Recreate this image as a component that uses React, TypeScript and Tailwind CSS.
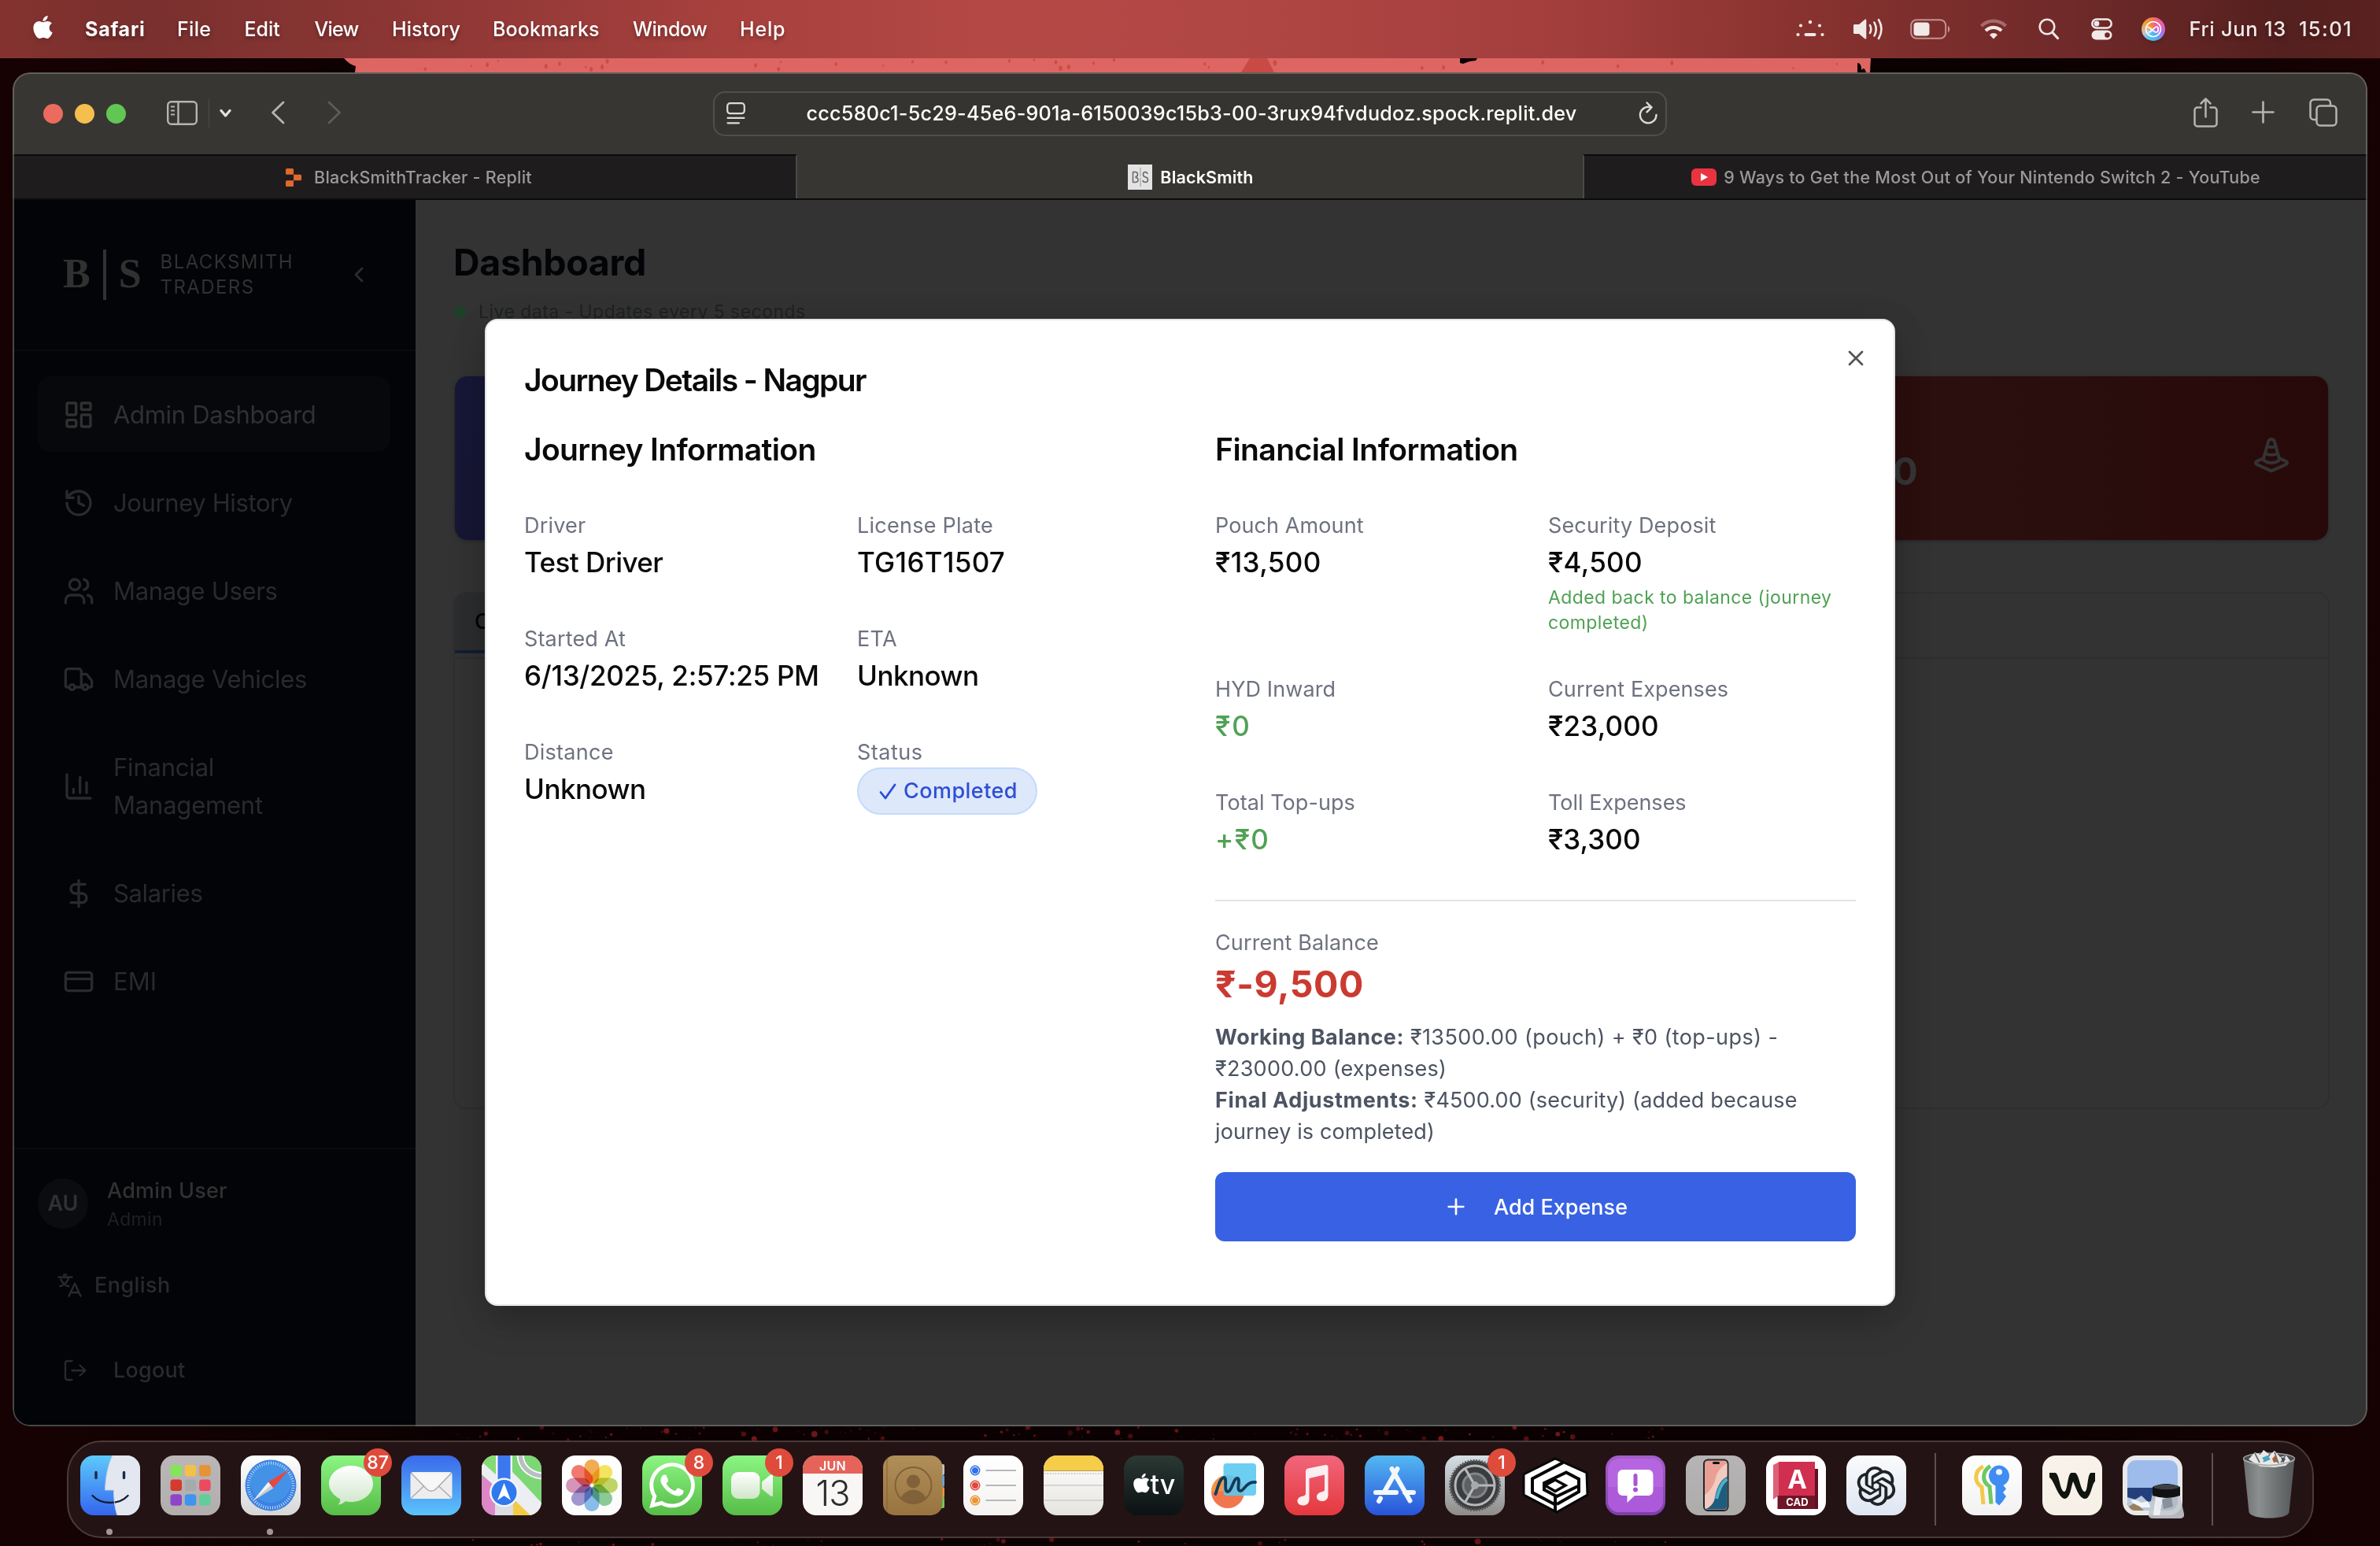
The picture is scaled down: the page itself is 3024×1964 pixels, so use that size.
import React from "react";
import {
  ChartColumn,
  ChevronLeft,
  CreditCard,
  DollarSign,
  History,
  LayoutDashboard,
  Plus,
  TrafficCone,
  Truck,
  Users,
  X,
} from "lucide-react";
import { FaApple, FaWhatsapp } from "react-icons/fa";
import { AiOutlineOpenAI } from "react-icons/ai";

/* ---------- Menu bar ---------- */

const menus = [
  { label: "Safari", cls: "w-[117px] font-bold tracking-[0.76px]" },
  { label: "File", cls: "w-[85.500px] tracking-[0.3px]" },
  { label: "Edit", cls: "w-[89px]" },
  { label: "View", cls: "w-[98.500px] tracking-[-0.76px]" },
  { label: "History", cls: "w-[128px] tracking-[0.1px]" },
  { label: "Bookmarks", cls: "w-[178px] tracking-[0.12px]" },
  { label: "Window", cls: "w-[136px] tracking-[-0.5px]" },
  { label: "Help", cls: "tracking-[0.8px]" },
];

function MenuBar() {
  return (
    <header className="flex h-[74px] shrink-0 items-center bg-[linear-gradient(90deg,#84322f_0%,#79302e_6%,#8e3735_18%,#a8413e_31%,#b44845_42%,#b04644_53%,#a23e3c_66%,#87322f_76%,#6f2a29_87%,#54201f_96%,#5a2220_100%)] text-[25px] font-medium text-white [text-shadow:0_3px_5px_rgba(0,0,0,0.35)]">
      <FaApple className="mt-[-5px] ml-[39px] h-[33px] w-[31px] drop-shadow-md" />
      <nav className="ml-[38px] flex items-center leading-[40px]">
        {menus.map((m) => (
          <span key={m.label} className={m.cls}>
            {m.label}
          </span>
        ))}
      </nav>
      <div className="ml-auto flex items-center pr-[35px] text-[#f1e9e8]">
        <svg className="h-[24px] w-[36px]" viewBox="0 0 36 24" fill="currentColor">
          <circle cx="18" cy="3" r="2.200" />
          <circle cx="6" cy="7.500" r="2.100" />
          <circle cx="30" cy="7.500" r="2.100" />
          <circle cx="2.500" cy="19" r="2.100" />
          <circle cx="33.500" cy="19" r="2.100" />
          <rect x="10.500" y="17" width="15" height="4" rx="2" />
        </svg>
        <svg className="ml-[36px] h-[30px] w-[40px]" viewBox="0 0 40 30">
          <path d="M1 10.500C1 9.500 1.600 9 2.500 9H8l7.500-6.300c.8-.6 1.800-.2 1.800.8v23c0 1-1 1.400-1.800.8L8 21H2.500C1.600 21 1 20.500 1 19.500z" fill="currentColor" />
          <path d="M22 10q2.600 5 0 10M27.500 6.500q4.500 8.500 0 17M33 3q7 12 0 24" fill="none" stroke="currentColor" strokeWidth="2.600" strokeLinecap="round" />
        </svg>
        <svg className="ml-[33px] h-[26px] w-[52px]" viewBox="0 0 52 26">
          <rect x="1.200" y="1.200" width="44" height="23.600" rx="7" fill="none" stroke="#d9b5b4" strokeWidth="2" opacity=".75" />
          <rect x="4.500" y="4.500" width="20" height="17" rx="4" fill="currentColor" />
          <path d="M48 9c3 1 3 7 0 8z" fill="#d9b5b4" opacity=".75" />
        </svg>
        <svg className="ml-[37px] h-[26px] w-[34px]" viewBox="0 0 34 26" fill="none" strokeWidth="4.200">
          <path d="M1.500 9a22 22 0 0 1 31 0" stroke="#a86a68" />
          <path d="M7 15a14 14 0 0 1 20 0" stroke="currentColor" />
          <path d="M17 25.500l-5-5.300a7 7 0 0 1 10 0z" fill="currentColor" />
        </svg>
        <svg className="ml-[40px] h-[28px] w-[27px]" viewBox="0 0 27 28" fill="none" stroke="currentColor" strokeLinecap="round">
          <circle cx="11" cy="11" r="9.300" strokeWidth="2.600" />
          <path d="M18 18.500l6.500 7" strokeWidth="3.200" />
        </svg>
        <svg className="ml-[40px] h-[28px] w-[27px]" viewBox="0 0 27 28">
          <rect x="1.300" y="1.500" width="24.400" height="11" rx="5.500" fill="none" stroke="currentColor" strokeWidth="2.500" />
          <circle cx="7" cy="7" r="3.400" fill="currentColor" />
          <path fillRule="evenodd" d="M6.500 15.500h14a6 6 0 0 1 0 12h-14a6 6 0 0 1 0-12zM20.500 18.300a3.300 3.300 0 1 0 0 6.600a3.300 3.300 0 1 0 0-6.600z" fill="currentColor" />
        </svg>
        <span className="ml-[37px] flex size-[30px] items-center justify-center rounded-full bg-[conic-gradient(from_20deg,#f2617f,#ea5fb4,#b06be8,#58a8f0,#4cc3ef,#b9c6d8,#f0a848,#f08a3c,#f2617f)] shadow-md">
          <svg className="size-[22px]" viewBox="0 0 22 22" fill="none" stroke="#fff" strokeWidth="1.700">
            <circle cx="11" cy="11" r="9.500" />
            <path d="M2 8.500c5-2 9 7 13 6.500 3-.5 3-7 0-7-3 0-6 7-10 7" />
          </svg>
        </span>
        <span className="ml-[30px] text-[25.500px] tracking-[0.7px]">Fri Jun 13</span>
        <span className="ml-[16px] text-[25.500px] tracking-[1.4px]">15:01</span>
      </div>
    </header>
  );
}

/* ---------- Safari window chrome ---------- */

function TitleBar() {
  return (
    <div className="grid h-[104px] grid-cols-[1fr_1212px_1fr] items-center bg-[#383633]">
      <div className="flex items-center pl-[39px] text-[#b5b4b2]">
        <span className="size-[25px] rounded-full bg-[#ed6a5f]" />
        <span className="ml-[15px] size-[25px] rounded-full bg-[#f5bf4f]" />
        <span className="ml-[15px] size-[25px] rounded-full bg-[#62c655]" />
        <svg className="mt-[-2px] ml-[52px] h-[31px] w-[39px]" viewBox="0 0 39 31" fill="none" stroke="currentColor" strokeWidth="2.400">
          <rect x="1.200" y="1.200" width="36.600" height="28.600" rx="4.500" />
          <path d="M14.500 1.500v28" />
          <path d="M5 7.500h5M5 12.500h5M5 17.500h5" strokeWidth="2" />
        </svg>
        <span className="ml-[14px] h-[36px] w-[1px] bg-[#4c4b49]" />
        <svg className="mt-[-1px] ml-[13px] h-[12px] w-[15px]" viewBox="0 0 15 12" fill="none" stroke="#e3e2e1" strokeWidth="3.200" strokeLinecap="round" strokeLinejoin="round">
          <path d="M2 2.500l5.500 6.500L13 2.500" />
        </svg>
        <svg className="mt-[-2px] ml-[50px] h-[30px] w-[18px]" viewBox="0 0 18 30" fill="none" stroke="currentColor" strokeWidth="2.800" strokeLinecap="round" strokeLinejoin="round">
          <path d="M16 2L2.500 15L16 28" />
        </svg>
        <svg className="mt-[-2px] ml-[54px] h-[30px] w-[18px]" viewBox="0 0 18 30" fill="none" stroke="#5d5c5a" strokeWidth="2.800" strokeLinecap="round" strokeLinejoin="round">
          <path d="M2 2l13.500 13L2 28" />
        </svg>
      </div>
      <div className="flex h-[57px] items-center justify-between rounded-[15px] border-2 border-[#504f4c] bg-[#363431] pr-[9px] pl-[15px] text-[#dcdbda]">
        <svg className="h-[28px] w-[24px]" viewBox="0 0 24 28" fill="none" stroke="currentColor" strokeWidth="2.200" strokeLinecap="round">
          <rect x="1.200" y="1.200" width="21.600" height="13" rx="3.500" />
          <path d="M1.500 19.800h21M1.500 26.300h14.500" />
        </svg>
        <span className="pt-[2px] text-[25.200px] font-medium tracking-[0.23px] text-white">
          ccc580c1-5c29-45e6-901a-6150039c15b3-00-3rux94fvdudoz.spock.replit.dev
        </span>
        <svg className="h-[30px] w-[26px]" viewBox="0 0 26 30" fill="none" stroke="currentColor" strokeWidth="2.400" strokeLinecap="round" strokeLinejoin="round">
          <path d="M16.500 7.300A10.300 10.300 0 1 0 23.500 17M11.500 1.500l6 5.800-6 6" />
        </svg>
      </div>
      <div className="flex items-center justify-end pr-[38px] text-[#b5b4b2]">
        <svg className="mt-[-3px] h-[38px] w-[31px]" viewBox="0 0 31 38" fill="none" stroke="currentColor" strokeWidth="2.500" strokeLinecap="round" strokeLinejoin="round">
          <path d="M9.500 12.500H5a3.500 3.500 0 0 0-3.500 3.500v17A3.500 3.500 0 0 0 5 36.500h21a3.500 3.500 0 0 0 3.500-3.500V16a3.500 3.500 0 0 0-3.500-3.500h-4.500M15.500 24.500V1.800M9.500 7.500l6-6 6 6" />
        </svg>
        <svg className="mt-[-3px] ml-[43px] size-[29px]" viewBox="0 0 29 29" stroke="currentColor" strokeWidth="2.600" strokeLinecap="round">
          <path d="M14.500 1.500v26M1.500 14.500h26" />
        </svg>
        <svg className="mt-[-3px] ml-[44px] size-[36px]" viewBox="0 0 36 36" fill="none" stroke="currentColor" strokeWidth="2.500">
          <rect x="9.500" y="9.500" width="25" height="25" rx="4.500" />
          <path d="M9 27H6a4.500 4.500 0 0 1-4.500-4.500V6A4.500 4.500 0 0 1 6 1.500h16.500A4.500 4.500 0 0 1 27 6v3" />
        </svg>
      </div>
    </div>
  );
}

function TabBar() {
  return (
    <div className="grid h-[58px] grid-cols-[997px_998px_997px] border-b-2 border-[#0c0b0c] bg-[#383633] text-[21.500px] font-medium tracking-[0.24px] text-[#9b999a]">
      <div className="flex items-center justify-center border-t-2 border-r-2 border-t-[#0c0b0c] border-r-[#4b4a49] bg-[#1f1c1d] pl-[12px]">
        <svg className="mr-[15px] h-[23px] w-[21px]" viewBox="0 0 21 23" fill="#e0692d">
          <path d="M1.500 0h7a1.500 1.500 0 0 1 1.500 1.500V7.700H1.500A1.500 1.500 0 0 1 0 6.200V1.500A1.500 1.500 0 0 1 1.500 0zM10 7.700h8.500a1.500 1.500 0 0 1 1.500 1.500v4.600a1.500 1.500 0 0 1-1.500 1.500H10zM1.500 15.300H10v6.200A1.500 1.500 0 0 1 8.500 23h-7A1.500 1.500 0 0 1 0 21.500v-4.700a1.500 1.500 0 0 1 1.500-1.500z" />
        </svg>
        BlackSmithTracker - Replit
      </div>
      <div className="flex items-center justify-center pt-[2px] pl-[2px] font-semibold tracking-[0.17px] text-white">
        <span className="mr-[10px] flex h-[32px] w-[31px] items-center justify-center bg-[#e4e3e3]">
          <svg className="size-[26px]" viewBox="0 0 26 26" fill="none" stroke="#666" strokeWidth="1.500">
            <path d="M13 1v24" stroke="#999" strokeWidth="1" />
            <path d="M0 13h26" stroke="#e4e3e3" strokeWidth="1.500" />
            <path d="M3.500 6.500v13M3 6.500h3.500q3 0 3 3t-3 3M6.500 13.500q3.500 0 3.500 3t-3.500 3H3M22 9q-.5-2.500-3-2.500T16.500 9.500t3 3.500 3 3.500-3.200 3-3.300-2.500" />
          </svg>
        </span>
        BlackSmith
      </div>
      <div className="flex items-center justify-center border-t-2 border-l-2 border-t-[#0c0b0c] border-l-[#4b4a49] bg-[#1f1c1d]">
        <span className="mr-[9px] flex h-[22px] w-[32px] items-center justify-center rounded-[6px] bg-[#ea3340]">
          <svg className="h-[10px] w-[9px]" viewBox="0 0 9 10" fill="#fff">
            <path d="M0 0l9 5-9 5z" />
          </svg>
        </span>
        <span className="tracking-[0.26px]">9 Ways to Get the Most Out of Your Nintendo Switch 2 - YouTube</span>
      </div>
    </div>
  );
}

/* ---------- Web application ---------- */

const navItems = [
  { label: "Admin Dashboard", Icon: LayoutDashboard, cls: "tracking-[-0.3px]", active: true },
  { label: "Journey History", Icon: History, cls: "tracking-[-0.38px]" },
  { label: "Manage Users", Icon: Users, cls: "tracking-[-0.32px]" },
  { label: "Manage Vehicles", Icon: Truck, cls: "tracking-[-0.28px]" },
  { label: "Financial Management", Icon: ChartColumn, cls: "tracking-[-0.2px] w-[240px]" },
  { label: "Salaries", Icon: DollarSign, cls: "tracking-[-0.35px]" },
  { label: "EMI", Icon: CreditCard, cls: "" },
];

function Sidebar() {
  return (
    <aside className="flex w-[512px] shrink-0 flex-col bg-[#030407] text-[#292a2b]">
      <div className="flex h-[192px] items-center border-b-2 border-[#090b0f] pl-[64px] text-[#313131]">
        <span className="pb-[2px] font-['Liberation_Serif'] text-[52px] leading-[64px] font-bold">B</span>
        <span className="ml-[16px] h-[64px] w-[4px] bg-[#313131]" />
        <span className="ml-[16px] pb-[2px] font-['Liberation_Serif'] text-[52px] leading-[64px] font-bold">S</span>
        <span className="ml-[24px] w-[180px] text-[24px] leading-[32px] tracking-[1.4px]">
          BLACKSMITH
          <br />
          TRADERS
        </span>
        <ChevronLeft className="ml-[56px] size-[32px] text-[#2c2d2d]" />
      </div>
      <nav className="flex flex-col gap-[16px] px-[32px] pt-[32px]">
        {navItems.map(({ label, Icon, cls, active }) => (
          <div
            key={label}
            className={
              active
                ? "flex items-center gap-[24px] rounded-[16px] bg-[#06080b] px-[32px] pt-[25px] pb-[23px] text-[#303131]"
                : "flex items-center gap-[24px] rounded-[16px] px-[32px] pt-[25px] pb-[23px]"
            }
          >
            <Icon className="size-[40px] shrink-0" strokeWidth={2} />
            <span className={"text-[31px] leading-[48px] " + cls}>{label}</span>
          </div>
        ))}
      </nav>
      <div className="mt-auto flex h-[354px] flex-col border-t-2 border-[#090b0f] px-[32px] pt-[32px] text-[27px] font-medium">
        <div className="flex items-center gap-[24px]">
          <span className="flex size-[64px] items-center justify-center rounded-full bg-[#0a0c0f] pt-[1px] font-semibold text-[#303131]">AU</span>
          <div className="pt-[1px]">
            <div className="leading-[40px] tracking-[0.2px] text-[#303131]">Admin User</div>
            <div className="text-[23px] leading-[32px] font-normal tracking-[0.33px] text-[#1f2022]">Admin</div>
          </div>
        </div>
        <div className="mt-[32px] flex h-[72px] items-center gap-[16px] pl-[24px]">
          <svg className="size-[32px]" viewBox="0 0 32 32" fill="none" stroke="currentColor" strokeWidth="2.500" strokeLinecap="round" strokeLinejoin="round">
            <path d="M2.500 5.500h17M9 2.500h3M5.500 8.500c2 5 6 8 10 8.500M15.500 5.500c-1.500 6-5 9.500-11 11.500" />
            <path d="M15.500 29.500L23 13.500l7.500 16M18 25h10" />
          </svg>
          <span className="tracking-[0.43px]">English</span>
        </div>
        <div className="mt-[28px] flex h-[88px] items-center gap-[32px] pl-[32px]">
          <svg className="size-[32px]" viewBox="0 0 32 32" fill="none" stroke="currentColor" strokeWidth="2.300" strokeLinecap="round" strokeLinejoin="round">
            <path d="M11.500 4H6a3 3 0 0 0-3 3v18a3 3 0 0 0 3 3h5.500M11.500 16h17M21.500 9.500l7 6.500-7 6.500" />
          </svg>
          <span className="pt-[1px] tracking-[0.23px]">Logout</span>
        </div>
      </div>
    </aside>
  );
}

function Dashboard() {
  return (
    <main className="flex flex-1 flex-col bg-[#333333] px-[48px] pt-[48px]">
      <h1 className="text-[46.500px] leading-[62px] font-bold tracking-[-0.33px] text-[#030407]">Dashboard</h1>
      <div className="mt-[16px] flex items-center gap-[16px] text-[23px] leading-[32px] tracking-[0.46px] text-[#1f2123]">
        <span className="size-[16px] rounded-full bg-[#1e4029]" />
        Live data - Updates every 5 seconds
      </div>
      <div className="mt-[66px] grid grid-cols-3 gap-[48px] px-[2px]">
        <div className="h-[208px] rounded-[16px] bg-[linear-gradient(135deg,#171838,#161129)] shadow-[0_1px_4px_rgba(0,0,0,0.3)]" />
        <div className="h-[208px] rounded-[16px] bg-[#131c2a]" />
        <div className="flex h-[208px] items-center justify-between rounded-[16px] bg-[linear-gradient(90deg,#2d1010,#2a0d0d_60%,#280909)] pr-[48px] shadow-[0_1px_4px_rgba(0,0,0,0.3)]">
          <span className="mt-[34px] ml-[208px] text-[47.500px] leading-[60px] font-bold text-[#363636]">0</span>
          <TrafficCone className="mt-[-8px] size-[48px] text-[#333333]" strokeWidth={2} />
        </div>
      </div>
      <div className="mt-[66px] h-[657px] overflow-hidden rounded-[16px] border-2 border-[#2e2e2f]">
        <div className="flex h-[83px] border-b-2 border-[#2e2e2f] pb-[5px]">
          <div className="flex w-[240px] items-center border-b-4 border-[#121e33] bg-[#2c2d2f] pl-[25px] text-[27px] font-medium text-[#030407]">C</div>
        </div>
      </div>
    </main>
  );
}

/* ---------- Journey dialog ---------- */

type FieldProps = {
  label: string;
  value: string;
  labelCls?: string;
  valueCls?: string;
  note?: string;
};

function Field({ label, value, labelCls = "", valueCls = "", note }: FieldProps) {
  return (
    <div>
      <div className={"h-[40px] pt-[1px] text-[27px] leading-[40px] text-[#6e7280] " + labelCls}>{label}</div>
      <div className={"h-[56px] text-[35px] leading-[54px] font-medium whitespace-nowrap " + valueCls}>{value}</div>
      {note && <div className="text-[23px] leading-[32px] tracking-[0.42px] text-[#50a155]">{note}</div>}
    </div>
  );
}

function JourneyDialog() {
  return (
    <section className="absolute top-[313px] left-[600px] w-[1792px] rounded-[16px] border-2 border-[#e5e5e7] bg-white p-[48px] text-[#0a0a0b] shadow-[0_20px_50px_-6px_rgba(0,0,0,0.25),0_0_40px_rgba(0,0,0,0.08)]">
      <X className="absolute top-[32px] right-[32px] size-[32px] text-[#545454]" strokeWidth={2} />
      <h2 className="text-[39px] leading-[56px] font-semibold tracking-[-1.6px]">Journey Details - Nagpur</h2>
      <div className="mt-[32px] grid grid-cols-2 gap-[64px]">
        <div>
          <h3 className="text-[39px] leading-[56px] font-semibold tracking-[-0.63px]">Journey Information</h3>
          <div className="mt-[48px] grid grid-cols-2 gap-x-[32px] gap-y-[48px]">
            <Field label="Driver" value="Test Driver" labelCls="tracking-[0.2px]" valueCls="tracking-[-0.55px]" />
            <Field label="License Plate" value="TG16T1507" labelCls="tracking-[0.25px]" valueCls="tracking-[0.3px]" />
            <Field label="Started At" value="6/13/2025, 2:57:25 PM" labelCls="tracking-[0.16px]" valueCls="tracking-[-0.28px]" />
            <Field label="ETA" value="Unknown" labelCls="tracking-[0.32px]" valueCls="tracking-[-0.53px]" />
            <Field label="Distance" value="Unknown" labelCls="tracking-[0.28px]" valueCls="tracking-[-0.53px]" />
            <div>
              <div className="h-[40px] pt-[1px] text-[27px] leading-[40px] tracking-[0.5px] text-[#6e7280]">Status</div>
              <div className="flex h-[60px] w-[229px] items-center rounded-full border-2 border-[#c3dafc] bg-[#dde8fb] pt-[1px] pl-[26px] text-[27px] font-medium tracking-[0.45px] text-[#2e4fd3]">
                <svg className="mr-[9px] h-[21px] w-[22px]" viewBox="0 0 22 21" fill="none" stroke="currentColor" strokeWidth="2.800" strokeLinecap="round" strokeLinejoin="round">
                  <path d="M2 11.500l6 7.500L20 2" />
                </svg>
                Completed
              </div>
            </div>
          </div>
        </div>
        <div className="pb-[32px]">
          <h3 className="text-[39px] leading-[56px] font-semibold tracking-[-0.55px]">Financial Information</h3>
          <div className="mt-[48px] grid grid-cols-2 gap-x-[32px] gap-y-[48px]">
            <Field label="Pouch Amount" value="₹13,500" labelCls="tracking-[0.1px]" valueCls="tracking-[0.4px]" />
            <Field
              label="Security Deposit"
              value="₹4,500"
              labelCls="tracking-[0.14px]"
              valueCls="tracking-[0.3px]"
              note="Added back to balance (journey completed)"
            />
            <Field label="HYD Inward" value="₹0" labelCls="tracking-[0.1px]" valueCls="tracking-[2px] text-[#50a155]" />
            <Field label="Current Expenses" value="₹23,000" labelCls="tracking-[0.1px]" valueCls="tracking-[0.2px]" />
            <Field label="Total Top-ups" value="+₹0" labelCls="tracking-[0.07px]" valueCls="tracking-[1.3px] text-[#50a155]" />
            <Field label="Toll Expenses" value="₹3,300" valueCls="tracking-[0.05px]" />
          </div>
          <div className="mt-[48px] border-t-2 border-[#e4e4e6] pt-[32px]">
            <div className="h-[40px] pt-[1px] text-[27px] leading-[40px] tracking-[0.14px] text-[#6e7280]">Current Balance</div>
            <div className="h-[64px] pt-[1px] text-[46.500px] leading-[64px] font-bold tracking-[0.6px] text-[#cb3a31]">₹-9,500</div>
            <div className="mt-[16px] h-[160px] pt-[1px] text-[27px] leading-[40px] whitespace-nowrap text-[#4c5462]">
              <div className="flex gap-[8px]">
                <strong className="tracking-[0.48px]">Working Balance:</strong>
                <span className="tracking-[0.42px]">₹13500.00 (pouch) + ₹0 (top-ups) -</span>
              </div>
              <div className="tracking-[0.27px]">₹23000.00 (expenses)</div>
              <div className="flex gap-[8px]">
                <strong className="tracking-[0.62px]">Final Adjustments:</strong>
                <span className="tracking-[0.18px]">₹4500.00 (security) (added because</span>
              </div>
              <div className="tracking-[0.12px]">journey is completed)</div>
            </div>
            <button className="mt-[32px] flex h-[88px] w-full items-center justify-center rounded-[12px] bg-[#3862e3] text-[27px] font-medium text-white">
              <Plus className="mr-[32px] size-[32px]" strokeWidth={2} />
              <span className="pt-[2px]">Add Expense</span>
            </button>
          </div>
        </div>
      </div>
    </section>
  );
}

/* ---------- Dock ---------- */

const petals = ["#f2a03c", "#f3df45", "#b5cf4f", "#7cc28a", "#78b3e6", "#9486c9", "#cf86b0", "#f0685a"];
const padColors = ["#83e558", "#f3c148", "#e69335", "#d53a2c", "#a6aaac", "#ec4a5e", "#8f45c8", "#3f94ee", "#62cc9c"];

type AppIconProps = { from: string; to: string; id: string; children?: React.ReactNode };

function AppIcon({ from, to, id, children }: AppIconProps) {
  return (
    <svg className="size-[76px] overflow-visible" viewBox="0 0 76 76">
      <defs>
        <linearGradient id={id} x1="0" y1="0" x2="0" y2="1">
          <stop offset="0" stopColor={from} />
          <stop offset="1" stopColor={to} />
        </linearGradient>
        <clipPath id={id + "-clip"}>
          <rect width="76" height="76" rx="17" />
        </clipPath>
        <linearGradient id={id + "-white"} x1="0" y1="0" x2="0" y2="1">
          <stop offset="0" stopColor="#ffffff" />
          <stop offset="1" stopColor="#cfe6c9" />
        </linearGradient>
      </defs>
      <rect width="76" height="76" rx="17" fill={"url(#" + id + ")"} />
      <g clipPath={"url(#" + id + "-clip)"}>{children}</g>
    </svg>
  );
}

function Slot({ children, badge, running }: { children: React.ReactNode; badge?: string; running?: boolean }) {
  return (
    <div className="relative flex size-[76px] items-center justify-center">
      {children}
      {badge && (
        <span className="absolute -top-[9px] -right-[14px] flex size-[36px] items-center justify-center rounded-full bg-[#df4b3b] text-[23px] font-medium text-white">
          {badge}
        </span>
      )}
      {running && <span className="absolute top-[93px] left-[33px] size-[8px] rounded-full bg-[#a39596]" />}
    </div>
  );
}

function FinderIcon() {
  return (
    <AppIcon id="finder" from="#5dcafb" to="#3465ee">
      <path d="M41 0C35 12 32 28 31.500 44h11c0 12 1.500 24 4.500 32H76V0z" fill="#e3e8f0" />
      <path d="M20 21.500v7M55.500 21.500v7" stroke="#1c2b44" strokeWidth="3.400" strokeLinecap="round" />
      <path d="M15.500 51c11 12 34 12 45 0" fill="none" stroke="#152034" strokeWidth="2.400" strokeLinecap="round" />
      <path d="M41 0C35 12 32 28 31.500 44h11c0 12 1.500 24 4.500 32" fill="none" stroke="#c3cedd" strokeWidth="1" />
    </AppIcon>
  );
}

function LaunchpadIcon() {
  return (
    <AppIcon id="launchpad" from="#bbb6b7" to="#b3aeae">
      {padColors.map((c, i) => (
        <rect key={c} x={12.5 + (i % 3) * 18.3} y={12 + Math.floor(i / 3) * 18.6} width="14.500" height="14.500" rx="3.500" fill={c} />
      ))}
    </AppIcon>
  );
}

function SafariIcon() {
  return (
    <AppIcon id="safari" from="#ffffff" to="#d6d6d6">
      <circle cx="38" cy="38" r="32.500" fill="#3b82e2" />
      <circle cx="38" cy="34" r="26" fill="#4a9dec" opacity=".6" />
      <circle cx="38" cy="38" r="28.500" fill="none" stroke="#cfe5fb" strokeWidth="4" strokeDasharray="0.9 2.080" />
      <path d="M61.500 18L35 33.500l6 8z" fill="#e8473d" />
      <path d="M15.500 57.500L35 33.500l6 8z" fill="#f3f3f3" />
      <path d="M15.500 57.500L38 38l3 3.500z" fill="#c9ccd0" />
    </AppIcon>
  );
}

function MessagesIcon() {
  return (
    <AppIcon id="messages" from="#8cf682" to="#57bc48">
      <path d="M38 13c15.500 0 28 10.300 28 23S53.500 59 38 59c-2.500 0-5-.3-7.300-.8-2.200 2.300-5.500 4-9.200 4.300 2-2 2.800-4.500 2.900-7C16 51 10 44 10 36c0-12.700 12.500-23 28-23z" fill="url(#messages-white)" />
    </AppIcon>
  );
}

function MailIcon() {
  return (
    <AppIcon id="mail" from="#3a69ea" to="#5cc4fb">
      <rect x="11.500" y="21" width="53" height="34" rx="3.500" fill="#ededee" />
      <path d="M13 53.500L30 37.500M63 53.500L46 37.500" stroke="#a9abad" strokeWidth="1.400" />
      <path d="M12.500 22.500l19.500 20q6 5.500 12 0l19.500-20" fill="#f7f7f7" stroke="#a9abad" strokeWidth="1.500" />
    </AppIcon>
  );
}

function MapsIcon() {
  return (
    <AppIcon id="maps" from="#84dc72" to="#77d37a">
      <path d="M0 26l38 24v26H0z" fill="#dd86c8" />
      <path d="M38 56l36 20H38z" fill="#f2cb45" />
      <path d="M0 0h20l56 60v16H62L0 16z" fill="#eceef2" />
      <path d="M0 0v16l18 17V0z" fill="#84dc72" />
      <path d="M0 8l20 18v16L0 24z" fill="#eceef2" />
      <path d="M17 40h23v36H17z" fill="#dadde3" />
      <path d="M18 0h21v40H18z" fill="#f4f4f4" />
      <path d="M20.500 0h16v34h-16z" fill="#3b78ee" />
      <path d="M39 0h37v56L39 21z" fill="#7dd777" />
      <path d="M76 26C60 24 50 14 49 0" fill="none" stroke="#fff" strokeWidth="9" />
      <path d="M76 26C60 24 50 14 49 0" fill="none" stroke="#b9bdc4" strokeWidth="5.500" />
      <circle cx="28.500" cy="47" r="18.500" fill="#f3f5f8" />
      <circle cx="28.500" cy="47" r="16" fill="#2f78ee" />
      <path d="M28.500 35l8.500 22-8.500-6-8.500 6z" fill="#fff" />
    </AppIcon>
  );
}

function PhotosIcon() {
  return (
    <AppIcon id="photos" from="#ffffff" to="#fbfbfb">
      {petals.map((c, i) => (
        <rect key={c} x="28.500" y="5" width="19" height="31" rx="9.500" fill={c} opacity=".88" transform={`rotate(${i * 45} 38 38)`} className="mix-blend-multiply" />
      ))}
    </AppIcon>
  );
}

function FaceTimeIcon() {
  return (
    <AppIcon id="facetime" from="#8cf682" to="#57bc48">
      <rect x="11" y="21" width="36.500" height="34" rx="9" fill="url(#facetime-white)" />
      <path d="M50 33.500l11-9c1.500-1 3-.5 3 1.300v24.400c0 1.800-1.500 2.300-3 1.300l-11-9z" fill="url(#facetime-white)" />
    </AppIcon>
  );
}

function CalendarIcon() {
  return (
    <div className="flex size-[76px] flex-col items-center overflow-hidden rounded-[17px] bg-[#f8f7f6]">
      <span className="flex h-[23px] w-full items-center justify-center bg-[#e6635a] pt-[2px] text-[16px] font-semibold tracking-[0.3px] text-white">JUN</span>
      <span className="mt-[-1px] text-[45px] leading-[52px] font-light tracking-[-1px] text-[#2d2c2c]">13</span>
    </div>
  );
}

function ContactsIcon() {
  return (
    <svg className="size-[76px] overflow-visible" viewBox="0 0 76 76">
      <defs>
        <linearGradient id="contacts" x1="0" y1="0" x2="0" y2="1">
          <stop offset="0" stopColor="#b18f59" />
          <stop offset="1" stopColor="#98733f" />
        </linearGradient>
      </defs>
      <rect x="66" y="11" width="12" height="14" rx="2" fill="#c3c3c3" />
      <rect x="66" y="25" width="12" height="15" rx="2" fill="#58a8e8" />
      <rect x="66" y="40" width="12" height="14" rx="2" fill="#ee9534" />
      <rect x="66" y="53" width="12" height="14" rx="2" fill="#69cf5c" />
      <rect width="75.500" height="76" rx="15" fill="url(#contacts)" />
      <path d="M5 4v68" stroke="#7d5f35" strokeWidth="1.500" opacity=".6" />
      <circle cx="38.500" cy="38" r="23" fill="none" stroke="#80613a" strokeWidth="2" />
      <circle cx="38.500" cy="33" r="8.500" fill="#80613a" />
      <path d="M22.500 54a17.500 17.500 0 0 1 32 0a22 22 0 0 1-32 0z" fill="#80613a" />
    </svg>
  );
}

function RemindersIcon() {
  return (
    <AppIcon id="reminders" from="#ffffff" to="#f4f3f1">
      {["#2f6fe8", "#e2463b", "#ec9432"].map((c, i) => (
        <g key={c}>
          <circle cx="15" cy={19 + i * 19} r="5.700" fill="none" stroke={c} strokeWidth="1.500" />
          <circle cx="15" cy={19 + i * 19} r="4" fill={c} />
          <path d={`M28.500 ${19 + i * 19}h38.500`} stroke="#b9b8ba" strokeWidth="1.800" />
        </g>
      ))}
    </AppIcon>
  );
}

function NotesIcon() {
  return (
    <AppIcon id="notes" from="#ffffff" to="#e5e4df">
      <rect width="76" height="19" fill="#f6cd49" />
      <path d="M0 19.500h76" stroke="#b69a4b" strokeWidth="1.200" />
      <path d="M1 23h74" stroke="#c2bfb8" strokeWidth="1.600" strokeDasharray="1.600 1.800" />
      <path d="M0 38h76M0 57h76" stroke="#cfcdcb" strokeWidth="1.500" />
    </AppIcon>
  );
}

function TvIcon() {
  return (
    <div className="flex size-[76px] items-center justify-center rounded-[17px] bg-linear-to-b from-[#2b3934] to-[#0c1113] text-white">
      <FaApple className="mt-[-6px] h-[28px] w-[23px]" />
      <span className="mt-[-3px] text-[34px] leading-[40px] font-medium tracking-[0px]">tv</span>
    </div>
  );
}

function FreeformIcon() {
  return (
    <AppIcon id="freeform" from="#ffffff" to="#ffffff">
      <circle cx="30" cy="46" r="21" fill="#f0764e" />
      <path d="M9 46a21 21 0 0 1 16-20.500v20z" fill="#f2a440" opacity=".7" />
      <rect x="24.500" y="10" width="41.500" height="41" rx="4" fill="#5cc9ee" opacity=".9" />
      <path d="M14.500 49C18 38 20 29 25 28c5 0-1 18 5 18 5 0 7-17 12-17 5 0-2 16 4 16 5 0 7-12 19-11" fill="none" stroke="#143a5c" strokeWidth="3.800" strokeLinecap="round" />
    </AppIcon>
  );
}

function MusicIcon() {
  return (
    <AppIcon id="music" from="#f1667c" to="#e4383d">
      <path d="M27 20c0-2 1-3 2.800-3.500L52 12c2-.4 3.500.5 3.500 2.500v36c0 5-3.500 7.500-7.500 7.500s-7-2.200-7-5.500 2.800-5.500 6.500-6.200c2.500-.5 3.500-1.300 3.500-3.300V24.500L31.500 29v27c0 5-3.700 7.500-8 7.500-4 0-7-2.300-7-5.700 0-3.200 2.800-5.300 6.500-6 2.800-.6 4-1.300 4-3.500z" fill="#fdeef0" />
    </AppIcon>
  );
}

function AppStoreIcon() {
  return (
    <AppIcon id="appstore" from="#53b8f2" to="#2853da">
      <g stroke="#f4f8fd" strokeWidth="6" strokeLinecap="round">
        <path d="M41.500 17L25 46M20 54.500L18 58M34.500 17L57.500 57.500" />
        <path d="M14 47h26M51 47h11" />
      </g>
    </AppIcon>
  );
}

function SettingsIcon() {
  return (
    <AppIcon id="settings" from="#d5dfe6" to="#8e8c8a">
      <circle cx="38" cy="38" r="31.500" fill="#3b3c3e" />
      <circle cx="38" cy="38" r="31" fill="none" stroke="#57585a" strokeWidth="4" strokeDasharray="1.800 1.700" />
      <circle cx="38" cy="38" r="25" fill="none" stroke="#b4b8bb" strokeWidth="3" />
      <circle cx="38" cy="38" r="15" fill="#5d5f61" stroke="#828689" strokeWidth="3" />
      <path d="M38 38h25M38 38L25.500 16.500M38 38L25.500 59.500" stroke="#b4b8bb" strokeWidth="3.200" />
      <circle cx="38" cy="38" r="5" fill="#a6aaad" />
    </AppIcon>
  );
}

function HexMazeIcon() {
  return (
    <svg className="h-[72px] w-[88px] shrink-0" viewBox="0 0 88 72">
      <path d="M44 2L84 20l1 28L46 70 4 48V22z" fill="#fff" stroke="#060606" strokeWidth="3" strokeLinejoin="round" />
      <path d="M54 7L15 27.500v17.500L44 60.500V51l30-14.500V28L58 19.500 30 33v8.500L46 50M74 36.500V44L46 60" fill="none" stroke="#060606" strokeWidth="4" />
      <path d="M44 29l13 7-13 7.500L31 36z" fill="#fff" stroke="#060606" strokeWidth="3.500" />
      <path d="M44 50v19" stroke="#060606" strokeWidth="4" />
    </svg>
  );
}

function FeedbackIcon() {
  return (
    <AppIcon id="feedback" from="#a65fc9" to="#7d3fa8">
      <rect x="3" y="4" width="70" height="68" rx="14" fill="#b465df" />
      <path d="M3 40h70v18a14 14 0 0 1-14 14H17A14 14 0 0 1 3 58z" fill="#a855d6" opacity=".7" />
      <path d="M23 18h30c5 0 7.500 2.500 7.500 7.500v18c0 5-2.500 7.500-7.500 7.500H37L27.500 60v-9H23c-5 0-7.500-2.500-7.500-7.500v-18c0-5 2.500-7.500 7.500-7.500z" fill="#fff" />
      <path d="M38 25.500v11" stroke="#a855d6" strokeWidth="5" strokeLinecap="round" />
      <circle cx="38" cy="43.500" r="3" fill="#a855d6" />
    </AppIcon>
  );
}

function PhoneMirrorIcon() {
  return (
    <AppIcon id="phone" from="#b6b4b4" to="#aeabab">
      <rect x="23" y="5.500" width="30.500" height="64.500" rx="5" fill="#e99f94" stroke="#22262b" strokeWidth="2" />
      <path d="M52.500 26C42 32 38 44 36 56c-2 6-6 10-12 12.500h24a4.500 4.500 0 0 0 4.500-4.500z" fill="#1d5c7d" />
      <path d="M24 50c6-4 12-12 14-22 2-8 8-15 14.500-18v17C42 32 39 44 36.500 56c-2 6-6 10-12 12z" fill="#f3d9d0" opacity=".75" />
      <path d="M52.500 30c-8 5-11 16-13.500 25" fill="none" stroke="#4fb0c6" strokeWidth="4" />
      <rect x="34" y="8" width="9" height="3" rx="1.500" fill="#111" />
    </AppIcon>
  );
}

function AutocadIcon() {
  return (
    <div className="relative size-[76px] rounded-[17px] bg-white">
      <svg className="absolute inset-0 size-[76px]" viewBox="0 0 76 76">
        <path d="M60 17h6v51H60z" fill="#5d1122" />
        <path d="M9 12l8-4v42l-8 6z" fill="#dd6079" />
        <path d="M16 8h46v43H16z" fill="#d02f50" />
        <path d="M14.500 51H62v17H14.500z" fill="#701528" />
      </svg>
      <div className="relative flex flex-col items-center pl-[3px] font-bold text-white">
        <span className="mt-[9px] text-[33px] leading-[42px]">A</span>
        <span className="text-[13px] leading-[17px]">CAD</span>
      </div>
    </div>
  );
}

function ChatIcon() {
  return (
    <div className="flex size-[76px] items-center justify-center rounded-[17px] bg-linear-to-b from-[#fafbfc] to-[#dde6f3]">
      <AiOutlineOpenAI className="size-[64px] text-[#1f2326]" />
    </div>
  );
}

function PasswordsIcon() {
  return (
    <AppIcon id="passwords" from="#ffffff" to="#f2f2f2">
      <path d="M27 14c-11 5-13 19-2 26l2 22" fill="none" stroke="#f2c94a" strokeWidth="5" />
      <path d="M36 13.500c-10 6-12 19-1 26l2 22" fill="none" stroke="#6cc963" strokeWidth="5" />
      <path d="M46.500 12.500a13.500 13.500 0 0 1 6 25.600l3.500 4.400-4 4.500 4 5-4.500 6.500-4.500 5-4.500-4V38.500a13.500 13.500 0 0 1 4-26z" fill="#3f8df2" />
      <ellipse cx="47" cy="21" rx="4" ry="3.800" fill="#eef4fd" />
    </AppIcon>
  );
}

function WaveIcon() {
  return (
    <AppIcon id="wave" from="#f8f2ea" to="#f6f0e7">
      <path d="M9 22h7c6 0 6 24 12 24 4 0 4-24 9-24h4c6 0 7 24 13 24 4 0 3-24 8-24h5v11c-4 2-5 22-13 22-8-1-11-14-15-22-3 8-3 20-10 22-9 0-14-24-20-27z" fill="#11150f" />
    </AppIcon>
  );
}

function PreviewIcon() {
  return (
    <svg className="size-[76px] overflow-visible" viewBox="0 0 76 76">
      <defs>
        <clipPath id="photo-clip">
          <rect x="6" y="6" width="64" height="64" rx="11" />
        </clipPath>
      </defs>
      <rect width="76" height="76" rx="17" fill="#e9e9e9" />
      <g clipPath="url(#photo-clip)">
        <rect x="6" y="6" width="64" height="36" fill="#9dbcec" />
        <rect x="6" y="41" width="64" height="30" fill="#23407c" />
        <path d="M6 53l10 3 8-5 8 8 8-2 6 16H6z" fill="#b9c9dc" />
        <path d="M10 57l6-1 8 4 8-2 4 8H18z" fill="#f2f5f7" />
        <path d="M6 66l8-5 8 4 6 6H6z" fill="#9a805f" />
      </g>
      <path d="M38 47h34l6 27q1 6-6 6H39q-7 0-6-6z" fill="#c4cacf" opacity=".9" />
      <path d="M42 50h10l-5 26h-8z" fill="#fff" opacity=".7" />
      <path d="M50 56l12-3 2 12-12 3z" fill="#7d8790" opacity=".8" />
      <path d="M38 40q17-8 35 0v11q-17 6-35 0z" fill="#111214" />
      <ellipse cx="55.500" cy="40" rx="16" ry="3.300" fill="#3d3f43" />
    </svg>
  );
}

function TrashIcon() {
  return (
    <svg className="h-[90px] w-[68px] shrink-0" viewBox="0 0 68 90">
      <defs>
        <linearGradient id="bin" x1="0" y1="0" x2="1" y2="0">
          <stop offset="0" stopColor="#6c6f70" />
          <stop offset=".3" stopColor="#8c8f90" />
          <stop offset=".65" stopColor="#6f7273" />
          <stop offset="1" stopColor="#55585a" />
        </linearGradient>
      </defs>
      <path d="M1.500 12q32 14 65 0l-7 68c-1 10-49 10-51 0z" fill="url(#bin)" />
      <ellipse cx="34" cy="12" rx="32.500" ry="7" fill="#4b4d4e" stroke="#9b9fa0" strokeWidth="1.500" />
      <path d="M8 13l8-9 7 3 4-6 8 6 6-5 7 8 8-2 5 7-6 6-14 2-18-1z" fill="#e8e8e6" />
      <path d="M16 5l6 12M35 7l-8 9M41 4l5 14M55 8l-6 9" stroke="#6e7072" strokeWidth="1.800" />
      <path d="M25 11l7-3 4 5-7 3z" fill="#44a6c8" />
      <path d="M38 12l4-4 3 8-5 1z" fill="#a5603a" />
      <path d="M49 10l6 2-3 6z" fill="#43506b" />
      <path d="M2 14q32 13 64 0" fill="none" stroke="#a8abac" strokeWidth="1.500" />
    </svg>
  );
}

function Dock() {
  return (
    <div className="absolute top-[1830px] left-[85px] flex h-[124px] w-[2855px] items-start rounded-[44px] border-2 border-[#4a3a3a] bg-[#241314] pt-[17px] pl-[15px]">
      <div className="flex gap-[26px]">
        <Slot running><FinderIcon /></Slot>
        <Slot><LaunchpadIcon /></Slot>
        <Slot running><SafariIcon /></Slot>
        <Slot badge="87"><MessagesIcon /></Slot>
        <Slot><MailIcon /></Slot>
        <Slot><MapsIcon /></Slot>
        <Slot><PhotosIcon /></Slot>
        <Slot badge="8">
          <div className="flex size-[76px] items-center justify-center rounded-[17px] bg-linear-to-b from-[#8cf682] to-[#57bc48] text-white">
            <FaWhatsapp className="size-[66px]" />
          </div>
        </Slot>
        <Slot badge="1"><FaceTimeIcon /></Slot>
        <Slot><CalendarIcon /></Slot>
        <Slot><ContactsIcon /></Slot>
        <Slot><RemindersIcon /></Slot>
        <Slot><NotesIcon /></Slot>
        <Slot><TvIcon /></Slot>
        <Slot><FreeformIcon /></Slot>
        <Slot><MusicIcon /></Slot>
        <Slot><AppStoreIcon /></Slot>
        <Slot badge="1"><SettingsIcon /></Slot>
        <Slot><HexMazeIcon /></Slot>
        <Slot><FeedbackIcon /></Slot>
        <Slot><PhoneMirrorIcon /></Slot>
        <Slot><AutocadIcon /></Slot>
        <Slot><ChatIcon /></Slot>
      </div>
      <span className="mt-[-3px] ml-[36px] h-[92px] w-[2px] bg-[#5e5051]" />
      <div className="ml-[33px] flex gap-[26px]">
        <Slot><PasswordsIcon /></Slot>
        <Slot><WaveIcon /></Slot>
        <Slot><PreviewIcon /></Slot>
      </div>
      <span className="mt-[-3px] ml-[37px] h-[92px] w-[2px] bg-[#5e5051]" />
      <div className="mt-[-8px] ml-[37px]">
        <TrashIcon />
      </div>
    </div>
  );
}

/* ---------- Wallpaper ---------- */

const noise = (n: number) => {
  const v = Math.sin(n * 127.1 + 11.7) * 43758.5453;
  return v - Math.floor(v);
};

const flecks = Array.from({ length: 150 }, (_, i) => ({
  x: 560 + noise(i + 1) * 1560,
  y: i % 4 === 0 ? 1955 + noise(i + 300) * 8 : 1813 + noise(i + 300) * 16,
  r: 0.6 + noise(i + 600) ** 3 * 3.4,
  o: 0.25 + noise(i + 900) * 0.5,
}));

const topFlecks = Array.from({ length: 34 }, (_, i) => ({
  x: 480 + noise(i + 40) * 1880,
  y: 76 + noise(i + 140) * 13,
  r: 1 + noise(i + 240) * 1.3,
}));

function Wallpaper() {
  return (
    <svg className="absolute inset-0 h-[1964px] w-[3024px]" viewBox="0 0 3024 1964">
      <defs>
        <linearGradient id="dusk" x1="0" y1="0" x2="1" y2="0">
          <stop offset="0" stopColor="#170203" />
          <stop offset=".2" stopColor="#0b0102" />
          <stop offset=".85" stopColor="#0b0102" />
          <stop offset="1" stopColor="#170203" />
        </linearGradient>
      </defs>
      <rect width="3024" height="1964" fill="url(#dusk)" />
      <path d="M437 74h1940l-1 18h-5q-3-10-7 0h-5V92H451l1-8q-8-2-15-10z" fill="#dd6562" />
      <path d="M1588 74h22l9 18h-42z" fill="#c94a44" />
      <path d="M1855 74h22l-2 3-8 1-8 3-4-1z" fill="#0b0102" />
      <path d="M2360 92V80q5 0 5 8l3 4z" fill="#0b0102" />
      {topFlecks.map((f, i) => (
        <ellipse key={i} cx={f.x} cy={f.y} rx={f.r} ry={f.r * 1.5} fill="#cf4a46" />
      ))}
      {flecks.map((f, i) => (
        <circle key={i} cx={f.x} cy={f.y} r={f.r} fill="#a02024" opacity={f.o} />
      ))}
    </svg>
  );
}

export default function App() {
  return (
    <div className="relative h-[1964px] w-[3024px] overflow-hidden bg-[#0b0102] font-['Inter',sans-serif]">
      <Wallpaper />
      <div className="relative flex flex-col">
        <MenuBar />
        <div className="relative mx-[16px] mt-[18px] flex h-[1720px] flex-col overflow-hidden rounded-[22px]">
          <TitleBar />
          <TabBar />
          <div className="flex flex-1">
            <Sidebar />
            <Dashboard />
          </div>
          <JourneyDialog />
          <div className="pointer-events-none absolute inset-0 rounded-[22px] border-2 border-[#8a8987]/50" />
        </div>
      </div>
      <Dock />
    </div>
  );
}
